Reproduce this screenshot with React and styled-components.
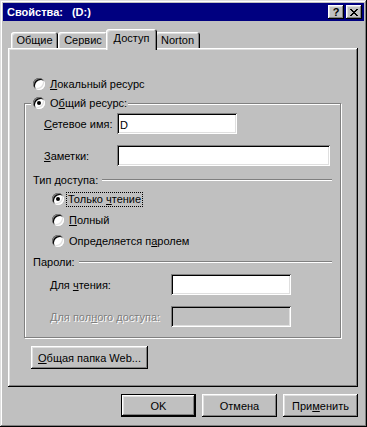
import React from "react";
import styled, { createGlobalStyle, css } from "styled-components";

const GlobalStyle = createGlobalStyle`
  html, body {
    margin: 0;
    padding: 0;
    background: #c0c0c0;
  }
  body {
    font-family: "Liberation Sans", Arial, sans-serif;
    font-size: 11px;
    color: #000;
  }
`;

const raised = css`
  box-shadow: inset -1px -1px #000, inset 1px 1px #fff, inset -2px -2px #808080,
    inset 2px 2px #dfdfdf;
`;

const sunken = css`
  box-shadow: inset 1px 1px #808080, inset -1px -1px #fff, inset 2px 2px #000,
    inset -2px -2px #dfdfdf;
`;

const Window = styled.div`
  width: 367px;
  height: 427px;
  box-sizing: border-box;
  padding: 3px;
  background: #c0c0c0;
  display: flex;
  flex-direction: column;
  box-shadow: inset -1px -1px #000, inset 1px 1px #dfdfdf, inset -2px -2px #808080,
    inset 2px 2px #fff;
`;

const TitleBar = styled.div`
  height: 18px;
  flex: none;
  display: flex;
  align-items: center;
  padding: 0 2px 0 4px;
  background: #000080;
  color: #fff;
  font-weight: bold;
`;

const TitleText = styled.div`
  flex: 1;
  white-space: pre;
`;

const TitleDrive = styled.span`
  margin-left: 9px;
`;

const CaptionButton = styled.div`
  width: 16px;
  height: 14px;
  margin-left: 2px;
  background: #c0c0c0;
  color: #000;
  display: flex;
  align-items: center;
  justify-content: center;
  font-weight: bold;
  font-size: 11px;
  ${raised}
`;

const Body = styled.div`
  padding: 8px 6px 0 5px;
  display: flex;
  flex-direction: column;
`;

const TabRow = styled.div`
  height: 19px;
  display: flex;
  align-items: flex-end;
  padding-left: 3px;
`;

const Tab = styled.div`
  position: relative;
  box-sizing: border-box;
  width: ${(p) => p.$w}px;
  height: ${(p) => (p.$active ? 21 : 16)}px;
  margin: ${(p) => (p.$active ? "0 -2px -2px" : "0")};
  z-index: ${(p) => (p.$active ? 2 : 0)};
  padding-bottom: ${(p) => (p.$active ? 3 : 0)}px;
  background: #c0c0c0;
  border-radius: 3px 3px 0 0;
  display: flex;
  align-items: center;
  justify-content: center;
  box-shadow: inset 1px 1px #fff, inset -1px 0 #000, inset -2px 0 #808080,
    inset 2px 2px #dfdfdf;
`;

const Panel = styled.div`
  position: relative;
  z-index: 1;
  width: 350px;
  height: 339px;
  box-sizing: border-box;
  padding-top: 28px;
  display: flex;
  flex-direction: column;
  ${raised}
`;

const RadioRow = styled.div`
  height: 16px;
  display: flex;
  align-items: center;
  gap: 5px;
  margin-left: ${(p) => p.$indent || 0}px;
`;

const RadioCircle = styled.span`
  position: relative;
  flex: none;
  width: 12px;
  height: 12px;
  border-radius: 50%;
  background: #fff;
  ${sunken}
  &::after {
    content: "";
    display: ${(p) => (p.$checked ? "block" : "none")};
    position: absolute;
    left: 4px;
    top: 4px;
    width: 4px;
    height: 4px;
    border-radius: 50%;
    background: #000;
  }
`;

const FocusText = styled.span`
  padding: 0 1px;
  margin-left: -2px;
  outline: 1px dotted #000;
  outline-offset: 0;
  line-height: 13px;
`;

const U = styled.span`
  text-decoration: underline;
  text-underline-offset: 1px;
`;

const Group = styled.div`
  position: relative;
  margin: 11px 0 0 16px;
  width: 317px;
  height: 235px;
  box-sizing: border-box;
  border: 1px solid #808080;
  box-shadow: inset 1px 1px #fff, 1px 1px #fff;
  padding: 9px 8px 0 8px;
  display: flex;
  flex-direction: column;
`;

const Legend = styled.div`
  position: absolute;
  top: -9px;
  left: 6px;
  padding: 0 1px 0 2px;
  background: #c0c0c0;
`;

const FieldRow = styled.div`
  height: 21px;
  display: flex;
  align-items: center;
  margin: ${(p) => p.$top || 0}px 0 0 ${(p) => p.$indent || 0}px;
`;

const Label = styled.span`
  width: ${(p) => p.$w}px;
  flex: none;
  color: ${(p) => (p.$disabled ? "#808080" : "#000")};
  text-shadow: ${(p) => (p.$disabled ? "1px 1px #fff" : "none")};
`;

const Field = styled.input`
  width: ${(p) => p.$w}px;
  height: 21px;
  box-sizing: border-box;
  border: none;
  outline: none;
  margin: 0;
  padding: 2px 3px 0;
  font: inherit;
  color: #000;
  background: ${(p) => (p.disabled ? "#c0c0c0" : "#fff")};
  ${sunken}
`;

const Section = styled.div`
  height: 14px;
  display: flex;
  align-items: center;
  margin-top: ${(p) => p.$top}px;
`;

const Rule = styled.div`
  flex: 1;
  margin-left: 4px;
  border-top: 1px solid #808080;
  border-bottom: 1px solid #fff;
`;

const RadioList = styled.div`
  display: flex;
  flex-direction: column;
  gap: 5px;
  margin-top: 4px;
`;

const Button = styled.div`
  width: ${(p) => p.$w || 75}px;
  height: 23px;
  box-sizing: border-box;
  background: #c0c0c0;
  display: flex;
  align-items: center;
  justify-content: center;
  ${(p) =>
    p.$default
      ? css`
          box-shadow: inset 0 0 0 1px #000, inset -2px -2px #000, inset 2px 2px #fff,
            inset -3px -3px #808080, inset 3px 3px #dfdfdf;
        `
      : raised}
`;

const WebButton = styled(Button)`
  margin: 8px 0 0 23px;
`;

const ButtonRow = styled.div`
  display: flex;
  justify-content: flex-end;
  gap: 6px;
  margin-top: 7px;
`;

function CloseGlyph() {
  return (
    <svg width="8" height="7" viewBox="0 0 8 7" shapeRendering="crispEdges">
      <path
        fill="#000"
        d="M0 0h2v1H0zM6 0h2v1H6zM1 1h2v1H1zM5 1h2v1H5zM2 2h4v1H2zM3 3h2v1H3zM2 4h4v1H2zM1 5h2v1H1zM5 5h2v1H5zM0 6h2v1H0zM6 6h2v1H6z"
      />
    </svg>
  );
}

function Radio({ checked, indent, children }) {
  return (
    <RadioRow $indent={indent}>
      <RadioCircle $checked={checked} />
      <span>{children}</span>
    </RadioRow>
  );
}

export default function App() {
  return (
    <>
      <GlobalStyle />
      <Window>
        <TitleBar>
          <TitleText>
            Свойства:<TitleDrive>(D:)</TitleDrive>
          </TitleText>
          <CaptionButton>?</CaptionButton>
          <CaptionButton>
            <CloseGlyph />
          </CaptionButton>
        </TitleBar>
        <Body>
          <TabRow>
            <Tab $w={47}>Общие</Tab>
            <Tab $w={50}>Сервис</Tab>
            <Tab $w={51} $active>
              Доступ
            </Tab>
            <Tab $w={45}>Norton</Tab>
          </TabRow>
          <Panel>
            <Radio indent={25}>
              <U>Л</U>окальный ресурс
            </Radio>
            <Group>
              <Legend>
                <Radio checked>
                  О<U>б</U>щий ресурс:
                </Radio>
              </Legend>
              <FieldRow $indent={11}>
                <Label $w={73}>
                  <U>С</U>етевое имя:
                </Label>
                <Field $w={120} defaultValue="D" />
              </FieldRow>
              <FieldRow $indent={11} $top={11}>
                <Label $w={73}>
                  <U>З</U>аметки:
                </Label>
                <Field $w={213} defaultValue="" />
              </FieldRow>
              <Section $top={7}>
                Тип доступа:
                <Rule />
              </Section>
              <RadioList>
                <RadioRow $indent={19}>
                  <RadioCircle $checked />
                  <FocusText>
                    Только <U>ч</U>тение
                  </FocusText>
                </RadioRow>
                <Radio indent={19}>
                  <U>П</U>олный
                </Radio>
                <Radio indent={19}>
                  Определяется п<U>а</U>ролем
                </Radio>
              </RadioList>
              <Section $top={6}>
                Пароли:
                <Rule />
              </Section>
              <FieldRow $indent={17} $top={5}>
                <Label $w={121}>
                  Для <U>ч</U>тения:
                </Label>
                <Field $w={120} defaultValue="" />
              </FieldRow>
              <FieldRow $indent={17} $top={11}>
                <Label $w={121} $disabled>
                  Для пол<U>н</U>ого доступа:
                </Label>
                <Field $w={120} disabled defaultValue="" />
              </FieldRow>
            </Group>
            <WebButton $w={117}>
              <span>
                <U>О</U>бщая папка Web...
              </span>
            </WebButton>
          </Panel>
          <ButtonRow>
            <Button $default>OK</Button>
            <Button>Отмена</Button>
            <Button>
              <span>
                При<U>м</U>енить
              </span>
            </Button>
          </ButtonRow>
        </Body>
      </Window>
    </>
  );
}
